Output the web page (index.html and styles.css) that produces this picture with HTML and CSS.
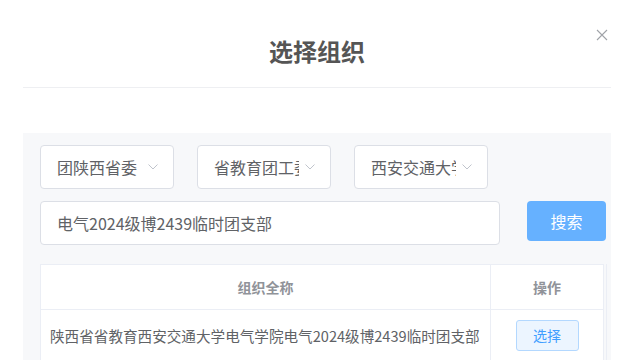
FILE: index.html
```html
<!DOCTYPE html>
<html lang="zh-CN">
<head>
    <meta charset="UTF-8">
    <meta name="viewport" content="width=device-width, initial-scale=1.0">
    <title>选择组织</title>
    <link rel="stylesheet" href="styles.css">
</head>
<body>
    <div class="dialog">
        <div class="dialog-header">
            <h2 class="dialog-title">选择组织</h2>
            <span class="dialog-close">
                <svg width="12" height="12" viewBox="0 0 12 12">
                    <path d="M1 1 L11 11 M11 1 L1 11" stroke="#a0a3a8" stroke-width="1.1" fill="none"/>
                </svg>
            </span>
        </div>
        <div class="panel">
            <!-- three cascading selects -->
            <div class="filters">
                <div class="select">
                    <span class="select-text">团陕西省委</span>
                    <svg class="chevron" viewBox="0 0 10 6"><path d="M0.5 0.5 L5 5 L9.5 0.5" stroke="#c0c4cc" stroke-width="1" fill="none"/></svg>
                </div>
                <div class="select">
                    <span class="select-text">省教育团工委</span>
                    <svg class="chevron" viewBox="0 0 10 6"><path d="M0.5 0.5 L5 5 L9.5 0.5" stroke="#c0c4cc" stroke-width="1" fill="none"/></svg>
                </div>
                <div class="select">
                    <span class="select-text">西安交通大学</span>
                    <svg class="chevron" viewBox="0 0 10 6"><path d="M0.5 0.5 L5 5 L9.5 0.5" stroke="#c0c4cc" stroke-width="1" fill="none"/></svg>
                </div>
            </div>
            <div class="search-row">
                <input class="search-input" type="text" value="电气2024级博2439临时团支部">
                <button class="search-btn">搜索</button>
            </div>
            <div class="table-wrap">
                <table class="org-table">
                    <colgroup>
                        <col class="col-name">
                        <col class="col-op">
                    </colgroup>
                    <thead>
                        <tr>
                            <th>组织全称</th>
                            <th>操作</th>
                        </tr>
                    </thead>
                    <tbody>
                        <tr>
                            <td class="name-cell">陕西省省教育西安交通大学电气学院电气2024级博2439临时团支部</td>
                            <td><button class="pick-btn">选择</button></td>
                        </tr>
                    </tbody>
                </table>
            </div>
        </div>
    </div>
</body>
</html>
```
FILE: styles.css
```css
body, html {
    margin: 0;
    padding: 0;
    background: #fff;
    font-family: "Noto Sans CJK SC", "Noto Sans", sans-serif;
    color: #606266;
    overflow: hidden;
}
.dialog {
    width: 626px;
    height: 360px;
    overflow: hidden;
}
.dialog-header {
    position: relative;
    margin: 0 15px 0 23px;
    height: 87px;
    border-bottom: 1px solid #eeeff2;
    display: flex;
    justify-content: center;
}
.dialog-title {
    margin: 0;
    padding-top: 35px;
    font-size: 24px;
    line-height: 32px;
    font-weight: bold;
    color: #555;
}
.dialog-close {
    position: absolute;
    top: 22px;
    right: 3px;
    width: 12px;
    height: 12px;
}
.panel {
    margin: 45px 15px 0 23px;
    background: #f7f8fa;
    padding: 12px 0 0 17px;
    height: 215px;
    overflow: hidden;
}
.filters {
    display: flex;
    gap: 23px;
}
.select {
    box-sizing: border-box;
    width: 134px;
    height: 44px;
    background: #fff;
    border: 1px solid #dcdfe6;
    border-radius: 4px;
    display: flex;
    align-items: center;
    padding: 0 15px 0 16px;
    font-size: 16px;
}
.select-text {
    flex: 1;
    overflow: hidden;
    white-space: nowrap;
}
.chevron {
    width: 10px;
    height: 6px;
    margin-left: 6px;
}
.search-row {
    display: flex;
    align-items: flex-start;
    gap: 27px;
    margin-top: 12px;
}
.search-input {
    box-sizing: border-box;
    width: 460px;
    height: 44px;
    border: 1px solid #dcdfe6;
    border-radius: 4px;
    padding: 0 16px;
    font-family: inherit;
    font-size: 16px;
    color: #606266;
    background: #fff;
    outline: none;
}
.search-btn {
    width: 79px;
    height: 40px;
    border: none;
    border-radius: 4px;
    background: #66b1ff;
    color: #fff;
    font-family: inherit;
    font-size: 16px;
}
.table-wrap {
    margin-top: 19px;
    width: 566px;
    border-right: 1px solid #ebeef5;
}
.org-table {
    width: 563px;
    table-layout: fixed;
    border-collapse: collapse;
    background: #fff;
}
.col-name {
    width: 450px;
}
.col-op {
    width: 113px;
}
.org-table th, .org-table td {
    border: 1px solid #ebeef5;
    text-align: center;
    padding: 0;
}
.org-table th {
    height: 44px;
    font-size: 14px;
    font-weight: bold;
    color: #909399;
}
.org-table td {
    height: 50px;
    font-size: 14.6px;
    color: #606266;
}
.org-table td.name-cell {
    text-align: left;
    padding-left: 9px;
    white-space: nowrap;
    overflow: hidden;
}
.pick-btn {
    width: 63px;
    height: 31px;
    border: 1px solid #b3d8ff;
    border-radius: 3px;
    background: #ecf5ff;
    color: #409eff;
    font-family: inherit;
    font-size: 14px;
}
```
